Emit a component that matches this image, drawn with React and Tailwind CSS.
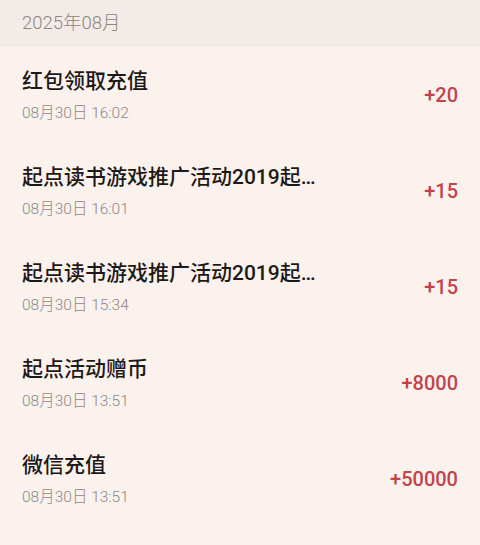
import React from "react";

const records = [
  { title: "红包领取充值", time: "08月30日 16:02", amount: "+20" },
  { title: "起点读书游戏推广活动2019起点读书游戏推广活动", time: "08月30日 16:01", amount: "+15" },
  { title: "起点读书游戏推广活动2019起点读书游戏推广活动", time: "08月30日 15:34", amount: "+15" },
  { title: "起点活动赠币", time: "08月30日 13:51", amount: "+8000" },
  { title: "微信充值", time: "08月30日 13:51", amount: "+50000" },
];

const fontStack = {
  fontFamily: '"Roboto", "Noto Sans CJK SC", sans-serif',
};

const RecordRow = ({ title, time, amount }) => (
  <div className="flex items-center justify-between h-[96px] pl-[22px] pr-[22px]">
    <div className="flex flex-col gap-[7px] min-w-0">
      <p className="max-w-[310px] truncate text-[21px] leading-[28px] font-medium text-[#1e1917]">
        {title}
      </p>
      <p className="text-[15.5px] leading-[22px] font-light text-[#8d8784]">{time}</p>
    </div>
    <span className="text-[20px] leading-[28px] font-medium text-[#c2434a]">
      {amount}
    </span>
  </div>
);

export default function App() {
  return (
    <div className="w-[480px] h-[545px] bg-[#fbf2ee] overflow-hidden" style={fontStack}>
      <div className="h-[47px] flex items-center pl-[22px] bg-[#f3ebe7]">
        <span className="text-[18.5px] font-light text-[#8b8481]">2025年08月</span>
      </div>
      {records.map((r, i) => (
        <RecordRow key={i} {...r} />
      ))}
    </div>
  );
}
